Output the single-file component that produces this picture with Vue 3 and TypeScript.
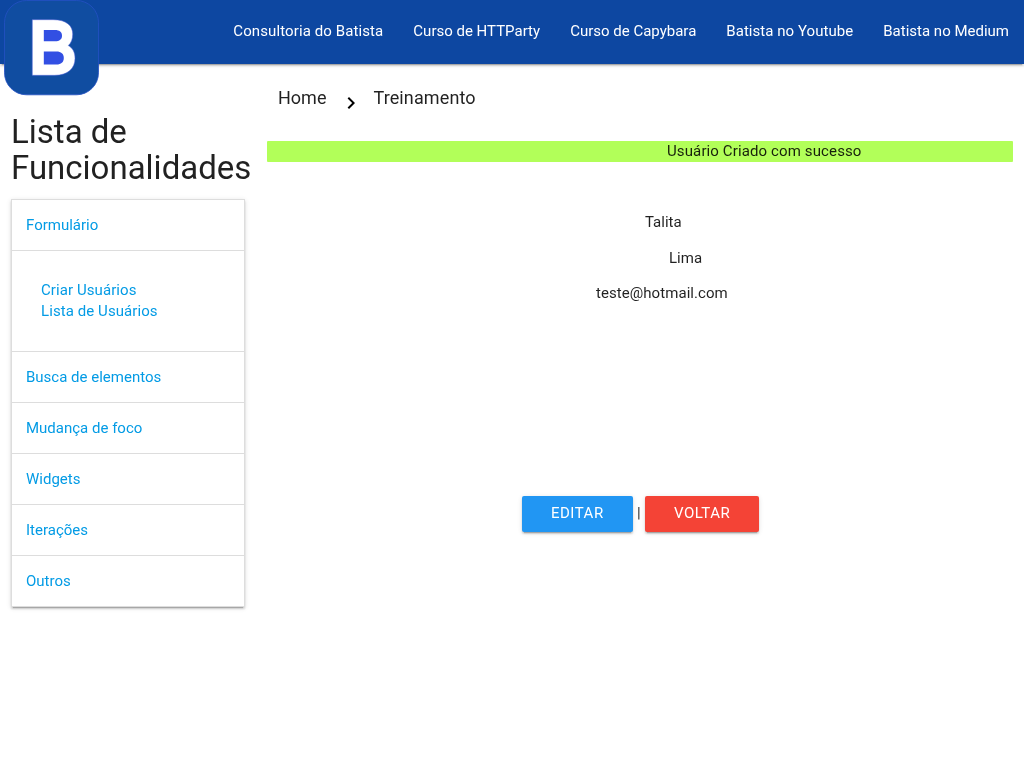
<script setup lang="ts">
interface MenuItem {
  label: string
  children?: string[]
}

const links: string[] = [
  'Consultoria do Batista',
  'Curso de HTTParty',
  'Curso de Capybara',
  'Batista no Youtube',
  'Batista no Medium',
]

const menu: MenuItem[] = [
  { label: 'Formulário', children: ['Criar Usuários', 'Lista de Usuários'] },
  { label: 'Busca de elementos' },
  { label: 'Mudança de foco' },
  { label: 'Widgets' },
  { label: 'Iterações' },
  { label: 'Outros' },
]
</script>

<template>
  <div class="page">
    <nav class="navbar">
      <a class="logo" href="#" aria-label="Batista">
        <svg width="95" height="96" viewBox="0 0 95 96">
          <rect x="0.5" y="0.5" width="94" height="94.3" rx="22" fill="#104da1" stroke="#2450c4" stroke-width="0.8" />
          <path
            d="M28.3 19.7H49C63 19.7 68.7 26 68.7 34C68.7 39.5 67 43 64.3 45.6C68.7 48.1 71 52.3 71 58.3C71 68.5 64 75.3 50.5 75.3H28.3Z"
            fill="#fff" stroke="#5564df" stroke-width="0.5"
          />
          <path d="M39.8 30.1H51C55.5 30.1 58 32.2 58 35.8C58 39.4 55.5 41.3 51 41.3H39.8Z" fill="#324fe3" />
          <path d="M39.8 51.5H52.5C57 51.5 59.8 53.8 59.8 58C59.8 62.2 57 64.5 52.5 64.5H39.8Z" fill="#324fe3" />
        </svg>
      </a>
      <ul class="nav-links">
        <li v-for="link in links" :key="link"><a href="#">{{ link }}</a></li>
      </ul>
    </nav>

    <div class="row">
      <aside class="sidebar">
        <h4>Lista de Funcionalidades</h4>
        <ul class="collapsible">
          <li v-for="item in menu" :key="item.label">
            <a class="header" href="#">{{ item.label }}</a>
            <div v-if="item.children" class="body">
              <a v-for="child in item.children" :key="child" href="#">{{ child }}</a>
            </div>
          </li>
        </ul>
      </aside>

      <main class="content">
        <div class="breadcrumbs">
          <a href="#">Home</a>
          <svg class="chevron" width="24" height="24" viewBox="0 0 24 24">
            <path d="M10 6L8.59 7.41 13.17 12l-4.58 4.59L10 18l6-6z" fill="#000" />
          </svg>
          <a class="current" href="#">Treinamento</a>
        </div>
        <p class="notice">Usuário Criado com sucesso</p>
        <div class="details">
          <p class="first-name">Talita</p>
          <p class="last-name">Lima</p>
          <p class="email">teste@hotmail.com</p>
        </div>
        <div class="actions">
          <a class="btn edit" href="#">Editar</a>
          <span class="divider">|</span>
          <a class="btn back" href="#">Voltar</a>
        </div>
      </main>
    </div>
  </div>
</template>

<style>
body {
  margin: 0;
  background: #fff;
}
</style>

<style scoped>
.page {
  height: 768px;
  overflow: hidden;
  font: 15px/21px Roboto, sans-serif;
  color: rgba(0, 0, 0, 0.87);
  will-change: opacity;
}
* {
  box-sizing: border-box;
}
a {
  color: #039be5;
  text-decoration: none;
}
ul {
  list-style: none;
  margin: 0;
  padding: 0;
}
p {
  margin: 0;
}
.navbar {
  position: relative;
  display: flex;
  justify-content: flex-end;
  height: 64px;
  background: #0d47a1;
  box-shadow: 0 2px 2px 0 rgba(0, 0, 0, 0.14), 0 1px 5px 0 rgba(0, 0, 0, 0.12), 0 3px 1px -2px rgba(0, 0, 0, 0.2);
}
.logo {
  position: absolute;
  left: 4px;
  top: 0;
}
.logo svg {
  display: block;
}
.nav-links {
  display: flex;
}
.nav-links a {
  display: block;
  padding: 0 15px;
  line-height: 62px;
  color: #fff;
}
.nav-links li:first-child {
  letter-spacing: 0.1px;
}
.nav-links li:nth-child(4) {
  letter-spacing: 0.05px;
}
.row {
  display: flex;
}
.sidebar {
  width: 256px;
  padding: 0 11px;
}
h4 {
  margin: 50px 0 12.7px;
  font-size: 33px;
  font-weight: 400;
  line-height: 36.2px;
}
.collapsible {
  border: 1px solid #ddd;
  border-bottom: 0;
  box-shadow: 0 2px 2px 0 rgba(0, 0, 0, 0.14), 0 1px 5px 0 rgba(0, 0, 0, 0.12), 0 3px 1px -2px rgba(0, 0, 0, 0.2);
}
.header {
  display: block;
  height: 51px;
  padding: 0 14px;
  line-height: 50px;
  border-bottom: 1px solid #ddd;
}
.body {
  display: flex;
  flex-direction: column;
  height: 101px;
  padding: 29px 29px 0;
  letter-spacing: 0.08px;
  border-bottom: 1px solid #ddd;
}
.content {
  flex: 1;
  padding: 0 11px;
}
.breadcrumbs {
  display: flex;
  height: 77px;
  padding: 23px 0 0 11px;
  font-size: 18px;
}
.breadcrumbs a {
  color: rgba(0, 0, 0, 0.87);
}
.chevron {
  margin: 4px 10.5px 0 12.5px;
}
.current {
  letter-spacing: 0.12px;
}
.notice {
  height: 21px;
  padding-left: 400px;
  letter-spacing: 0.12px;
  background: #b2ff59;
  border-radius: 1px;
}
.details {
  display: grid;
  gap: 14.6px;
  height: 334px;
  padding-top: 50px;
  align-content: start;
}
.first-name {
  padding-left: 378px;
}
.last-name {
  padding-left: 402px;
}
.email {
  padding-left: 329px;
  letter-spacing: 0.06px;
}
.actions {
  display: flex;
  justify-content: center;
  gap: 4px;
  padding-left: 1px;
}
.btn {
  width: 114px;
  height: 36px;
  padding-left: 29px;
  line-height: 35px;
  letter-spacing: 0.5px;
  text-transform: uppercase;
  color: #fff;
  border-radius: 2px;
  box-shadow: 0 2px 2px 0 rgba(0, 0, 0, 0.14), 0 1px 5px 0 rgba(0, 0, 0, 0.12), 0 3px 1px -2px rgba(0, 0, 0, 0.2);
}
.edit {
  width: 111px;
  background: #2196f3;
}
.back {
  background: #f44336;
}
.divider {
  width: 4px;
  line-height: 35px;
}
</style>
